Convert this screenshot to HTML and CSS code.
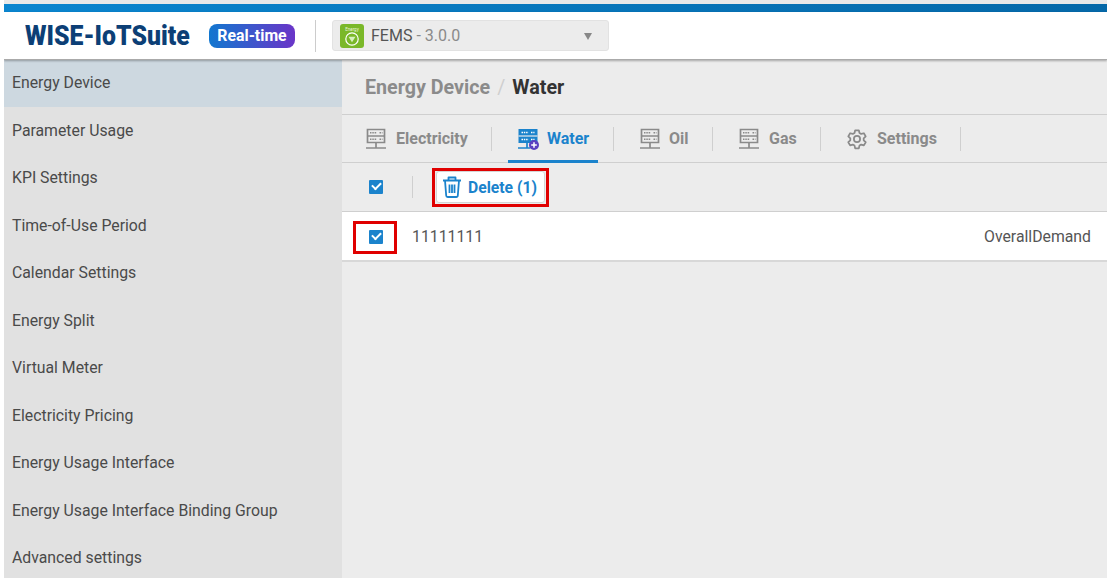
FILE: index.html
```html
<!DOCTYPE html>
<html>
	<head>
		<title>Energy Device - Water</title>
		<link rel="stylesheet" href="styles.css">
	</head>
	<body>
		<svg class="defs" width="0" height="0">
			<symbol id="srv" viewBox="0 0 22 22">
				<path d="M2.500 1.500h17v13h-17zM2.500 8h17M11 14.500v5.500M1 20h20" fill="none" stroke="currentColor" stroke-width="1.700"/>
				<path d="M5 4.800h7M5 11.300h7M14.500 4.800h3M14.500 11.300h3" stroke="currentColor" stroke-width="1.500" stroke-dasharray="1.500 .8"/>
			</symbol>
		</svg>
		<div class="page">
			<div class="topbar"></div>
			<div class="header">
				<div class="logo">WISE-IoTSuite</div>
				<div class="badge">Real-time</div>
				<div class="head_sep"></div>
				<div class="select">
					<svg class="app_icon" viewBox="0 0 24 24">
						<rect width="24" height="24" rx="3" fill="#7ab829"/>
						<text x="12" y="6.500" text-anchor="middle" font-size="4.500" fill="#e8f5d8" font-family="Roboto">Energy</text>
						<circle cx="12" cy="15" r="6.200" fill="none" stroke="#fff" stroke-width="1.200"/>
						<path d="M8.500 12.800h7l-3.500 5.500z" fill="#d7f0c0"/>
					</svg>
					<span class="app_name">FEMS</span><span class="app_ver"> - 3.0.0</span>
					<span class="caret"></span>
				</div>
			</div>
			<div class="main">
				<div class="sidebar">
					<div class="side_item active">Energy Device</div>
					<div class="side_item">Parameter Usage</div>
					<div class="side_item">KPI Settings</div>
					<div class="side_item">Time-of-Use Period</div>
					<div class="side_item">Calendar Settings</div>
					<div class="side_item">Energy Split</div>
					<div class="side_item">Virtual Meter</div>
					<div class="side_item">Electricity Pricing</div>
					<div class="side_item">Energy Usage Interface</div>
					<div class="side_item">Energy Usage Interface Binding Group</div>
					<div class="side_item">Advanced settings</div>
				</div>
				<div class="content">
					<div class="crumbs"><span class="crumb_a">Energy Device</span><span class="crumb_s">/</span><span class="crumb_b">Water</span></div>
					<div class="tabs">
						<div class="tab tab1"><svg class="tab_icon"><use href="#srv"/></svg>Electricity</div>
						<div class="tab tab2 on">
							<svg class="tab_icon" viewBox="0 0 22 22">
								<path d="M1.500 1h19v14h-19z" fill="#1b83cc"/>
								<path d="M4.500 4.500h7M4.500 11.500h7M14 4.500h3.500M14 11.500h3.500" stroke="#fff" stroke-width="1.500" stroke-dasharray="1.500 .8"/>
								<path d="M1.500 8h19" stroke="#ececec" stroke-width="1.200"/>
								<path d="M10 15v5M1 20h12" stroke="#1b83cc" stroke-width="1.700"/>
								<circle cx="17" cy="17" r="5" fill="#5a3fc0"/>
								<path d="M14.200 17h5.600M17 14.200v5.600" stroke="#fff" stroke-width="1.500"/>
							</svg>Water
						</div>
						<div class="tab tab3"><svg class="tab_icon"><use href="#srv"/></svg>Oil</div>
						<div class="tab tab4"><svg class="tab_icon"><use href="#srv"/></svg>Gas</div>
						<div class="tab tab5">
							<svg class="tab_icon" viewBox="0 0 24 24" fill="none" stroke="currentColor" stroke-width="1.900" stroke-linejoin="round">
								<path d="M10 2.500h4l.7 2.900 1.900 1.100 2.900-.8 2 3.400-2.200 2.100v2.200l2.200 2.100-2 3.400-2.900-.8-1.900 1.100-.7 2.900h-4l-.7-2.900-1.900-1.100-2.900.8-2-3.400 2.200-2.100v-2.200L2.500 9.100l2-3.400 2.900.8 1.900-1.100z"/>
								<circle cx="12" cy="12" r="3.400"/>
							</svg>Settings
						</div>
					</div>
					<div class="toolbar">
						<span class="check"></span>
						<div class="tool_sep"></div>
						<div class="marked delete_mark">
							<div class="delete_btn">
								<svg class="trash" viewBox="0 0 20 22" fill="none" stroke="#1b83cc" stroke-width="1.800" stroke-linejoin="round">
									<path d="M1 4.500h18M6.500 4.500V1.500h7v3M3 4.500l1.200 15a1.500 1.500 0 0 0 1.500 1.500h8.600a1.500 1.500 0 0 0 1.500-1.500l1.200-15M7.500 8.500v8.500M12.500 8.500v8.500M10 8.500v8.500"/>
								</svg>
								Delete (1)
							</div>
						</div>
					</div>
					<div class="row">
						<div class="marked row_mark"><span class="check"></span></div>
						<div class="row_name">11111111</div>
						<div class="row_type">OverallDemand</div>
					</div>
				</div>
			</div>
		</div>
	</body>
</html>
```

FILE: styles.css
```css
html,body{
	margin:0;
	padding:0;
	background:#fff;
}
body{
	font-family:Roboto, "Liberation Sans", sans-serif;
	color:#444;
	overflow:hidden;
}
.defs{
	display:block;
	height:0;
}
.page{
	width:1103px;
	height:578px;
	margin-left:4px;
	padding-top:4px;
	box-sizing:border-box;
	display:flex;
	flex-direction:column;
	overflow:hidden;
	background:#e8e8e8;
}
.topbar{
	height:8px;
	background:linear-gradient(90deg,#0a85cf,#0568a8);
	flex:none;
}
.header{
	height:47px;
	flex:none;
	display:flex;
	align-items:center;
	background:#fff;
	border-bottom:1px solid #aaa;
	box-shadow:0 1px 2px rgba(0,0,0,0.3);
	position:relative;
}
.logo{
	margin-left:21px;
	font-size:28px;
	font-weight:900;
	color:#0c3f76;
	width:184px;
	white-space:nowrap;
	transform:scaleX(0.885);
	transform-origin:left center;
}
.badge{
	width:86px;
	height:24px;
	line-height:23px;
	text-align:center;
	border-radius:8px;
	color:#fff;
	font-size:15.8px;
	font-weight:700;
	background:linear-gradient(90deg,#1177cf,#6a35c8);
}
.head_sep{
	width:1px;
	height:32px;
	background:#ccc;
	margin-left:20px;
}
.select{
	width:277px;
	height:31px;
	margin-left:16px;
	background:#ececec;
	border:1px solid #e2e2e2;
	border-radius:3px;
	display:flex;
	align-items:center;
	font-size:16px;
	box-sizing:border-box;
	position:relative;
}
.app_icon{
	width:24px;
	height:24px;
	margin:0 7px 0 7px;
}
.app_name{
	color:#555;
	white-space:pre;
}
.app_ver{
	color:#8a8a8a;
	white-space:pre;
}
.caret{
	position:absolute;
	right:16px;
	top:12px;
	border-left:4px solid transparent;
	border-right:4px solid transparent;
	border-top:7px solid #888;
}
.main{
	flex:1;
	display:flex;
	min-height:0;
}
.sidebar{
	width:338px;
	flex:none;
	background:#e1e1e1;
}
.side_item{
	height:47.5px;
	line-height:45px;
	padding-left:8px;
	font-size:15.8px;
	color:#4a4a4a;
}
.side_item.active{
	height:47px;
	margin-bottom:.5px;
	background:#cdd8e0;
}
.content{
	flex:1;
	background:#ececec;
}
.crumbs{
	height:55px;
	display:flex;
	align-items:center;
	padding-left:23px;
	font-size:19.7px;
	font-weight:700;
	box-sizing:border-box;
	border-bottom:1px solid #cfcfcf;
}
.crumb_a{
	color:#8b8b8b;
}
.crumb_s{
	color:#cfcfcf;
	font-weight:400;
	margin:0 7px;
}
.crumb_b{
	color:#333;
}
.tabs{
	height:48px;
	display:flex;
	align-items:stretch;
	box-sizing:border-box;
	border-bottom:1px solid #cfcfcf;
}
.tab{
	display:flex;
	align-items:center;
	font-size:16px;
	font-weight:700;
	color:#8a8a8a;
	position:relative;
	box-sizing:border-box;
}
.tab::after{
	content:"";
	position:absolute;
	right:0;
	top:12px;
	height:24px;
	width:1px;
	background:#cfcfcf;
}
.tab_icon{
	width:22px;
	height:22px;
	margin-right:9px;
}
.tab1{
	width:150px;
	padding-left:23px;
}
.tab2{
	width:122px;
	padding-left:25px;
	color:#1b83cc;
}
.tab2 .tab_icon{
	margin-right:8px;
}
.tab2.on::before{
	content:"";
	position:absolute;
	left:16px;
	bottom:-1px;
	width:90px;
	height:3px;
	background:#1b83cc;
}
.tab3{
	width:99px;
	padding-left:25px;
}
.tab3 .tab_icon{
	margin-right:8px;
}
.tab4{
	width:108px;
	padding-left:25px;
}
.tab5{
	width:140px;
	padding-left:25px;
}
.toolbar{
	height:49px;
	display:flex;
	align-items:center;
	box-sizing:border-box;
	border-bottom:1px solid #cfcfcf;
	padding-left:27px;
}
.check{
	display:block;
	width:14px;
	height:14px;
	background:#1b83cc;
	border-radius:1px;
	position:relative;
	flex:none;
}
.check::after{
	content:"";
	position:absolute;
	left:3px;
	top:2px;
	width:7px;
	height:4px;
	border-left:2px solid #fff;
	border-bottom:2px solid #fff;
	transform:rotate(-45deg);
}
.tool_sep{
	width:1px;
	height:22px;
	background:#cfcfcf;
	margin-left:29px;
}
.marked{
	border:3px solid #e00000;
	box-sizing:border-box;
	display:flex;
	align-items:center;
	justify-content:center;
}
.delete_mark{
	width:117px;
	height:39px;
	margin-left:19px;
}
.delete_btn{
	width:109px;
	height:32px;
	background:#fff;
	border:1px solid #d5d5d5;
	border-radius:3px;
	box-sizing:border-box;
	display:flex;
	align-items:center;
	padding-left:5px;
	font-size:15.7px;
	font-weight:700;
	color:#1b83cc;
	white-space:nowrap;
}
.trash{
	width:20px;
	height:22px;
	margin-right:6px;
}
.row{
	height:50px;
	display:flex;
	align-items:center;
	background:#fff;
	box-sizing:border-box;
	border-bottom:2px solid #d8d8d8;
	padding-left:11px;
	font-size:15.8px;
	color:#555;
}
.row_mark{
	width:44px;
	height:33px;
	margin-top:3px;
	padding:0 0 2px 1px;
}
.row_name{
	margin-left:15px;
}
.row_type{
	margin-left:auto;
	margin-right:16px;
}
```
